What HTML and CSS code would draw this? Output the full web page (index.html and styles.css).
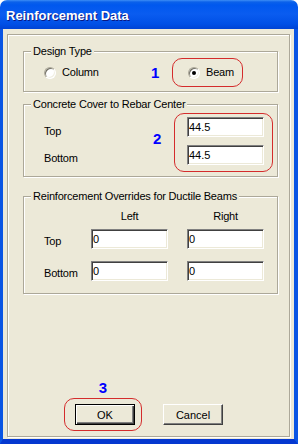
FILE: index.html
```html
<!doctype html>
<html lang="en">
  <head>
    <meta charset="utf-8">
    <title>Reinforcement Data</title>
    <link rel="stylesheet" href="styles.css">
  </head>
  <body>
    <div class="window">
      <div class="titlebar"><span class="title">Reinforcement Data</span></div>
      <div class="client">
        <div class="frame">

          <div class="group group-type">
            <span class="legend">Design Type</span>
            <div class="type-row">
              <label class="choice choice-column"><span class="radio"></span>Column</label>
              <span class="num num-1">1</span>
              <div class="ring ring-beam">
                <label class="choice"><span class="radio checked"></span>Beam</label>
              </div>
            </div>
          </div>

          <div class="group group-cover">
            <span class="legend">Concrete Cover to Rebar Center</span>
            <div class="cover-row">
              <div class="cover-labels">
                <div class="cover-label top">Top</div>
                <div class="cover-label">Bottom</div>
              </div>
              <span class="num num-2">2</span>
              <div class="ring ring-cover">
                <input class="edit" type="text" value="44.5">
                <input class="edit" type="text" value="44.5">
              </div>
            </div>
          </div>

          <div class="group group-ovr">
            <span class="legend">Reinforcement Overrides for Ductile Beams</span>
            <div class="ovr-head">
              <span>Left</span>
              <span>Right</span>
            </div>
            <div class="ovr-row">
              <span class="ovr-label">Top</span>
              <input class="edit" type="text" value="0">
              <input class="edit" type="text" value="0">
            </div>
            <div class="ovr-row second">
              <span class="ovr-label">Bottom</span>
              <input class="edit" type="text" value="0">
              <input class="edit" type="text" value="0">
            </div>
          </div>

          <div class="buttons">
            <div class="ok-col">
              <span class="num">3</span>
              <div class="ring ring-ok">
                <button class="btn default">OK</button>
              </div>
            </div>
            <button class="btn cancel">Cancel</button>
          </div>

        </div>
      </div>
    </div>
  </body>
</html>
```

FILE: styles.css
```css
html, body { margin: 0; padding: 0; }
body {
  width: 298px;
  height: 444px;
  overflow: hidden;
  background: #fff;
  font-family: "Liberation Sans", Arial, sans-serif;
  font-size: 11px;
  letter-spacing: -0.2px;
  color: #000;
}

/* window chrome */
.window {
  display: flex;
  flex-direction: column;
  width: 298px;
  height: 444px;
}
.titlebar {
  flex: none;
  height: 29px;
  box-sizing: border-box;
  padding: 1px 0 0 6px;
  display: flex;
  align-items: center;
  border-radius: 7px 7px 0 0;
  background: linear-gradient(#3d8ef5 0, #0b61ea 2px, #0058ee 5px, #0a5cf0 14px, #0050e6 24px, #0043d4 29px);
}
.title {
  color: #fff;
  font-weight: bold;
  font-size: 13px;
  letter-spacing: 0;
  text-shadow: 1px 1px 0 #0a1883;
}
.client {
  flex: 1;
  background: #ece9d8;
  border-left: 3px solid #0a55e4;
  border-right: 4px solid #0a55e4;
  border-bottom: 5px solid #0438d0;
  padding: 5px 0 0 4px;
}
.frame {
  width: 283px;
  height: 403px;
  box-sizing: border-box;
  padding: 16px 0 0 15px;
  border: 1px solid #aca899;
  box-shadow: inset 1px 1px 0 #fff, 1px 1px 0 #fff;
}

/* group boxes */
.group {
  position: relative;
  width: 255px;
  box-sizing: border-box;
  border: 1px solid #aca899;
  box-shadow: inset 1px 1px 0 #fff, 1px 1px 0 #fff;
}
.legend {
  position: absolute;
  top: -7px;
  left: 7px;
  padding: 0 2px;
  line-height: 13px;
  background: #ece9d8;
}
.group-type { height: 41px; padding: 6px 0 0 20px; }
.group-cover { height: 73px; margin-top: 12px; padding: 8px 0 0 20px; }
.group-ovr { height: 98px; margin-top: 19px; padding: 12px 0 0 20px; }

/* annotations */
.num {
  color: #0000ff;
  font-weight: bold;
  font-size: 15px;
  line-height: 15px;
  letter-spacing: 0;
}
.ring {
  box-sizing: border-box;
  border: 1px solid #d42c2c;
  border-radius: 10px;
}

/* design type */
.type-row { display: flex; align-items: center; height: 29px; }
.choice { display: flex; align-items: center; gap: 6px; line-height: 13px; }
.choice-column { width: 107px; }
.num-1 { width: 21px; }
.ring-beam { width: 71px; height: 29px; display: flex; align-items: center; padding-left: 15px; }
.radio {
  position: relative;
  width: 12px;
  height: 12px;
  box-sizing: border-box;
  border-radius: 50%;
  background: #fff;
  border: 1px solid;
  border-color: #aca899 #fff #fff #aca899;
  box-shadow: inset 1px 1px 0 #716f64, inset -1px -1px 0 #f1efe2;
}
.radio.checked::after {
  content: "";
  position: absolute;
  left: 3px;
  top: 3px;
  width: 4px;
  height: 4px;
  border-radius: 50%;
  background: #000;
}

/* edit boxes */
.edit {
  display: block;
  width: 77px;
  height: 20px;
  box-sizing: border-box;
  margin: 0;
  padding: 0 0 0 1px;
  border: 1px solid;
  border-color: #808080 #fff #fff #808080;
  box-shadow: inset 1px 1px 0 #404040, inset -1px -1px 0 #ece9d8;
  background: #fff;
  font-family: "Liberation Sans", Arial, sans-serif;
  font-size: 11px;
  line-height: 16px;
  color: #000;
  outline: none;
}

/* concrete cover */
.cover-row { display: flex; align-items: flex-start; }
.cover-labels { width: 109px; padding-top: 11px; }
.cover-label { line-height: 14px; }
.cover-label.top { height: 27px; }
.num-2 { width: 21px; margin-top: 18px; }
.ring-cover {
  width: 99px;
  height: 59px;
  padding: 3px 0 0 12px;
  display: flex;
  flex-direction: column;
  gap: 8px;
}

/* overrides */
.ovr-head { display: flex; gap: 19px; padding-left: 47px; height: 20px; line-height: 14px; }
.ovr-head span { width: 77px; text-align: center; }
.ovr-row { display: flex; align-items: center; gap: 19px; }
.ovr-row .edit:first-of-type { margin-left: -19px; }
.ovr-row.second { margin-top: 12px; }
.ovr-label { width: 47px; padding-top: 4px; line-height: 14px; }

/* buttons */
.buttons { display: flex; align-items: flex-end; margin: 86px 0 0 41px; }
.ok-col { display: flex; flex-direction: column; align-items: center; }
.ring-ok { margin-top: 3px; padding: 5px 6px 5px 10px; }
.btn {
  display: block;
  width: 60px;
  height: 21px;
  box-sizing: border-box;
  margin: 0;
  padding: 0;
  background: #ece9d8;
  font-family: "Liberation Sans", Arial, sans-serif;
  font-size: 11px;
  color: #000;
}
.btn.default {
  border: 1px solid #000;
  box-shadow: inset 1px 1px 0 #fff, inset -1px -1px 0 #404040, inset -2px -2px 0 #808080;
}
.btn.cancel {
  margin: 0 0 6px 21px;
  border: 1px solid;
  border-color: #fff #404040 #404040 #fff;
  box-shadow: inset -1px -1px 0 #808080;
}
```
